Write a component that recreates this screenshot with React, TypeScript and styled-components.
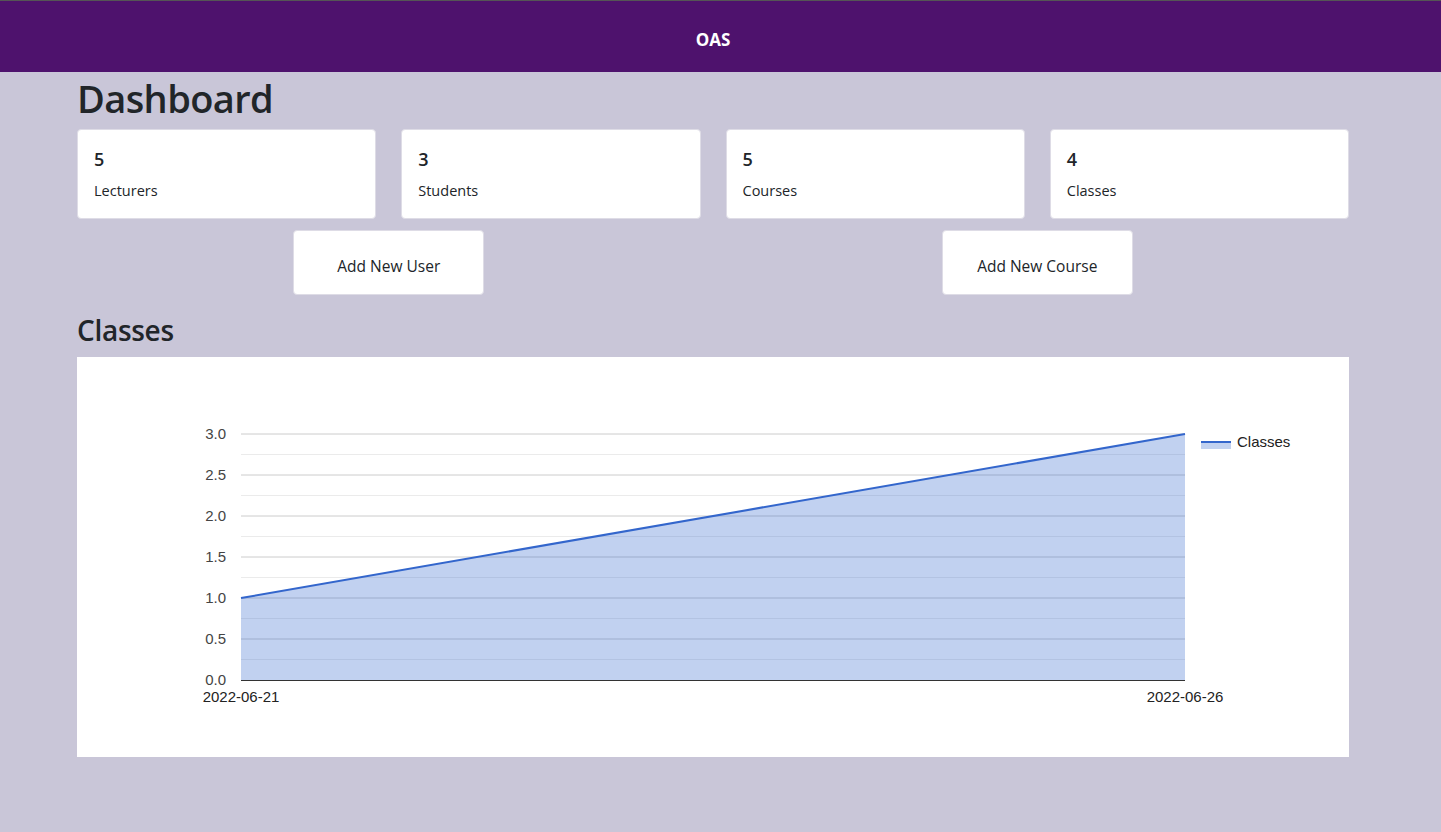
import styled, { createGlobalStyle } from "styled-components";

const GlobalStyle = createGlobalStyle`
  html, body {
    margin: 0;
    padding: 0;
    background: #c9c6d8;
    font-family: "Open Sans", "Noto Sans", sans-serif;
    color: #212529;
  }
  * { box-sizing: border-box; }
`;

const Page = styled.div`
  min-height: 832px;
  border-top: 1px solid #555;
`;

const Header = styled.header`
  height: 71px;
  background: #4e126d;
  display: flex;
  align-items: center;
  justify-content: center;
  color: #fff;
  font-weight: 700;
  font-size: 17px;
  padding: 5px 15px 0 0;
`;

const Body = styled.div`
  padding-right: 15px;
`;

const Container = styled.main`
  width: 1272px;
  margin: 0 auto;
`;

const Title = styled.h1`
  margin: 0 0 5px;
  font-size: 38px;
  font-weight: 600;
  line-height: 52px;
  letter-spacing: -0.6px;
`;

const StatsRow = styled.div`
  display: grid;
  grid-template-columns: repeat(4, 1fr);
  gap: 25px;
`;

const Card = styled.div`
  background: #fff;
  border: 1px solid #dedce6;
  border-radius: 4px;
  height: 90px;
  padding: 16px;
`;

const CardNumber = styled.div`
  font-size: 18px;
  font-weight: 600;
  line-height: 26px;
`;

const CardLabel = styled.div`
  margin-top: 9px;
  font-size: 14.5px;
  line-height: 20px;
`;

const ActionsRow = styled.div`
  display: grid;
  grid-template-columns: 1fr 1fr;
  gap: 25px;
  margin-top: 11px;
`;

const ActionCell = styled.div`
  display: flex;
  justify-content: center;
`;

const ActionButton = styled.button`
  width: 191px;
  height: 65px;
  background: #fff;
  border: 1px solid #dedce6;
  border-radius: 4px;
  font-family: inherit;
  font-size: 15.5px;
  color: #212529;
  padding-top: 8px;
  cursor: pointer;
`;

const SectionTitle = styled.h2`
  margin: 16px 0 0;
  font-size: 28px;
  font-weight: 600;
  line-height: 38px;
  letter-spacing: -0.3px;
`;

const ChartBox = styled.div`
  background: #fff;
  height: 400px;
  margin-top: 8px;
`;

const ChartText = styled.text`
  font-family: "Liberation Sans", Arial, sans-serif;
  font-size: 15px;
  fill: #222;
`;

const left = 164;
const right = 1108;
const top = 77;
const bottom = 323;
const yFor = (v: number) => bottom - (v / 3) * (bottom - top);

function ClassesChart() {
  const ticks = [0, 0.5, 1, 1.5, 2, 2.5, 3];
  const minor = [0.25, 0.75, 1.25, 1.75, 2.25, 2.75];
  const y1 = yFor(1);
  const y2 = yFor(3);
  return (
    <svg width="1272" height="400" viewBox="0 0 1272 400">
      {minor.map((t) => (
        <line key={"m" + t} x1={left} x2={right} y1={yFor(t)} y2={yFor(t)} stroke="#ebebeb" strokeWidth="1" />
      ))}
      {ticks.slice(1).map((t) => (
        <line key={"g" + t} x1={left} x2={right} y1={yFor(t)} y2={yFor(t)} stroke="#cccccc" strokeWidth="1" />
      ))}
      <polygon
        points={`${left},${bottom} ${left},${y1} ${right},${y2} ${right},${bottom}`}
        fill="#3366cc"
        fillOpacity="0.3"
      />
      <line x1={left} y1={y1} x2={right} y2={y2} stroke="#3366cc" strokeWidth="2" />
      <line x1={left} x2={right} y1={bottom + 0.5} y2={bottom + 0.5} stroke="#333" strokeWidth="1" />
      {ticks.map((t) => (
        <ChartText key={"l" + t} x={149} y={yFor(t) + 5} textAnchor="end" style={{ fill: "#444" }}>
          {t.toFixed(1)}
        </ChartText>
      ))}
      <ChartText x={left} y={345} textAnchor="middle">2022-06-21</ChartText>
      <ChartText x={right} y={345} textAnchor="middle">2022-06-26</ChartText>
      <rect x={1124} y={85} width={30} height={7} fill="#3366cc" fillOpacity="0.3" />
      <line x1={1124} x2={1154} y1={85} y2={85} stroke="#3366cc" strokeWidth="2" />
      <ChartText x={1160} y={90}>Classes</ChartText>
    </svg>
  );
}

const stats = [
  { value: 5, label: "Lecturers" },
  { value: 3, label: "Students" },
  { value: 5, label: "Courses" },
  { value: 4, label: "Classes" },
];

export default function App() {
  return (
    <Page>
      <GlobalStyle />
      <Header>OAS</Header>
      <Body>
        <Container>
          <Title>Dashboard</Title>
          <StatsRow>
            {stats.map((s) => (
              <Card key={s.label}>
                <CardNumber>{s.value}</CardNumber>
                <CardLabel>{s.label}</CardLabel>
              </Card>
            ))}
          </StatsRow>
          <ActionsRow>
            <ActionCell>
              <ActionButton>Add New User</ActionButton>
            </ActionCell>
            <ActionCell>
              <ActionButton>Add New Course</ActionButton>
            </ActionCell>
          </ActionsRow>
          <SectionTitle>Classes</SectionTitle>
          <ChartBox>
            <ClassesChart />
          </ChartBox>
        </Container>
      </Body>
    </Page>
  );
}
